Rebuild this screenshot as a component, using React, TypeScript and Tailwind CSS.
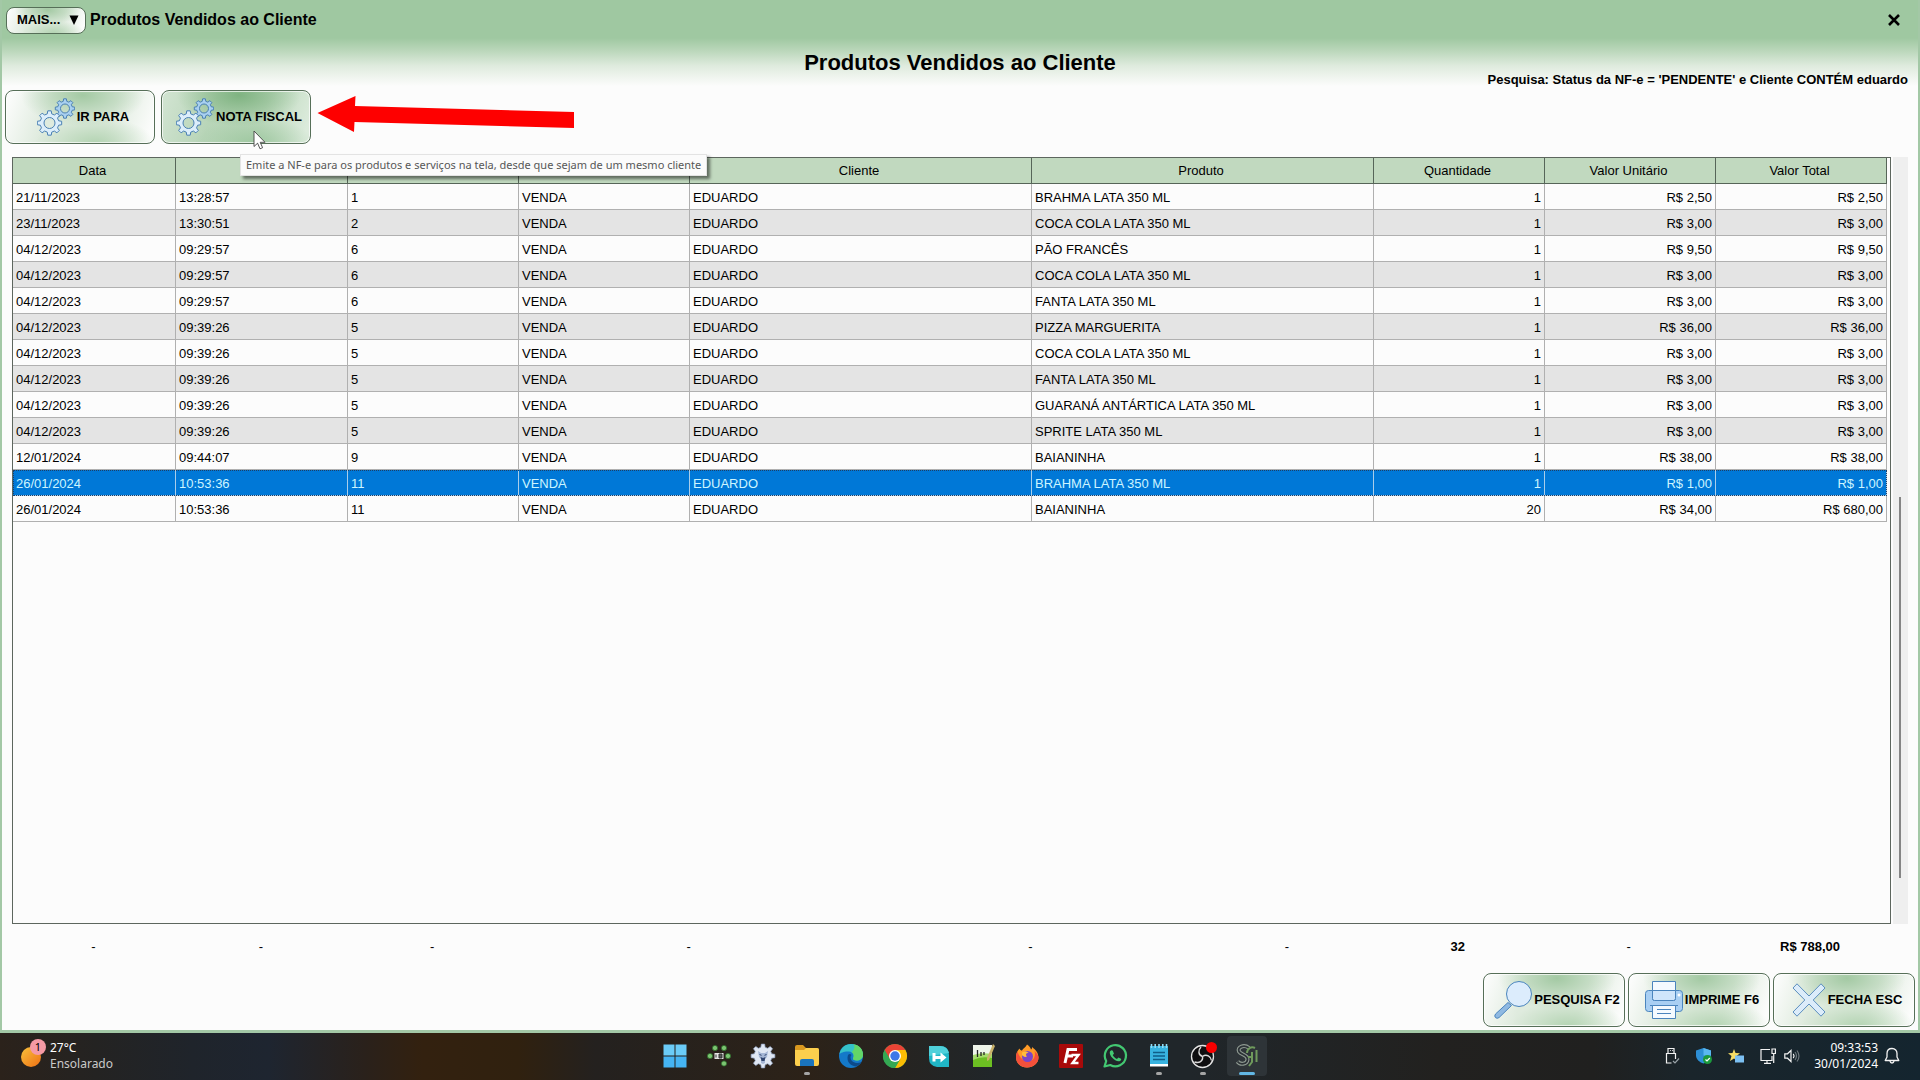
import React from 'react';

interface Sale {
  date: string;
  time: string;
  order: number;
  product: string;
  quantity: number;
  unitPrice: string;
  total: string;
}

const columns = [
  { name: 'Data', label: 'Data', width: 163 },
  { name: 'Hora', label: '', width: 172 },
  { name: 'Venda', label: '', width: 171 },
  { name: 'Tipo', label: '', width: 171 },
  { name: 'Cliente', label: 'Cliente', width: 342 },
  { name: 'Produto', label: 'Produto', width: 342 },
  { name: 'Quantidade', label: 'Quantidade', width: 171 },
  { name: 'Valor Unitário', label: 'Valor Unitário', width: 171 },
  { name: 'Valor Total', label: 'Valor Total', width: 171 },
];

const totalWidth = columns.reduce((sum, c) => sum + c.width, 0);

const sales: Sale[] = [
  { date: '21/11/2023', time: '13:28:57', order: 1, product: 'BRAHMA LATA 350 ML', quantity: 1, unitPrice: 'R$ 2,50', total: 'R$ 2,50' },
  { date: '23/11/2023', time: '13:30:51', order: 2, product: 'COCA COLA LATA 350 ML', quantity: 1, unitPrice: 'R$ 3,00', total: 'R$ 3,00' },
  { date: '04/12/2023', time: '09:29:57', order: 6, product: 'PÃO FRANCÊS', quantity: 1, unitPrice: 'R$ 9,50', total: 'R$ 9,50' },
  { date: '04/12/2023', time: '09:29:57', order: 6, product: 'COCA COLA LATA 350 ML', quantity: 1, unitPrice: 'R$ 3,00', total: 'R$ 3,00' },
  { date: '04/12/2023', time: '09:29:57', order: 6, product: 'FANTA LATA 350 ML', quantity: 1, unitPrice: 'R$ 3,00', total: 'R$ 3,00' },
  { date: '04/12/2023', time: '09:39:26', order: 5, product: 'PIZZA MARGUERITA', quantity: 1, unitPrice: 'R$ 36,00', total: 'R$ 36,00' },
  { date: '04/12/2023', time: '09:39:26', order: 5, product: 'COCA COLA LATA 350 ML', quantity: 1, unitPrice: 'R$ 3,00', total: 'R$ 3,00' },
  { date: '04/12/2023', time: '09:39:26', order: 5, product: 'FANTA LATA 350 ML', quantity: 1, unitPrice: 'R$ 3,00', total: 'R$ 3,00' },
  { date: '04/12/2023', time: '09:39:26', order: 5, product: 'GUARANÁ ANTÁRTICA LATA 350 ML', quantity: 1, unitPrice: 'R$ 3,00', total: 'R$ 3,00' },
  { date: '04/12/2023', time: '09:39:26', order: 5, product: 'SPRITE LATA 350 ML', quantity: 1, unitPrice: 'R$ 3,00', total: 'R$ 3,00' },
  { date: '12/01/2024', time: '09:44:07', order: 9, product: 'BAIANINHA', quantity: 1, unitPrice: 'R$ 38,00', total: 'R$ 38,00' },
  { date: '26/01/2024', time: '10:53:36', order: 11, product: 'BRAHMA LATA 350 ML', quantity: 1, unitPrice: 'R$ 1,00', total: 'R$ 1,00' },
  { date: '26/01/2024', time: '10:53:36', order: 11, product: 'BAIANINHA', quantity: 20, unitPrice: 'R$ 34,00', total: 'R$ 680,00' },
];

const selectedRow = 11;

const footerTotals = ['-', '-', '-', '-', '-', '-', '32', '-', 'R$ 788,00'];

const gearPath = (cx: number, cy: number, outer: number, inner: number) => {
  const points: string[] = [];
  for (let i = 0; i < 8; i++) {
    const base = (i * Math.PI) / 4;
    [[-0.24, inner], [-0.14, outer], [0.14, outer], [0.24, inner]].forEach(([offset, r]) => {
      const x = cx + r * Math.sin(base + offset);
      const y = cy - r * Math.cos(base + offset);
      points.push(`${x.toFixed(2)} ${y.toFixed(2)}`);
    });
  }
  return `M${points.join('L')}Z`;
};

const GearsIcon = () => (
  <svg viewBox="0 0 38 38" className="h-[38px] w-[38px] shrink-0" stroke="#4a80b4" strokeWidth="1">
    <path
      fillRule="evenodd"
      fill="#a9d0f0"
      d={`${gearPath(28, 10.5, 9.8, 7.4)}M32.5 10.5a4.5 4.5 0 1 0-9 0a4.5 4.5 0 1 0 9 0Z`}
    />
    <path
      fillRule="evenodd"
      fill="#dceefb"
      d={`${gearPath(12.5, 25, 12.3, 9.4)}M18 25a5.5 5.5 0 1 0-11 0a5.5 5.5 0 1 0 11 0Z`}
    />
  </svg>
);

const SearchIcon = () => (
  <svg viewBox="0 0 38 38" className="h-[38px] w-[38px] shrink-0" stroke="#4a84bd" strokeWidth="1">
    <path d="M14 21.5l3.5 3L5 36.6q-2 1.4-3.5 0t0-3.6Z" fill="#8fb9e2" />
    <circle cx="25" cy="13" r="12.5" fill="#dcecfc" />
  </svg>
);

const PrinterIcon = () => (
  <svg viewBox="0 0 38 38" className="h-[38px] w-[38px] shrink-0" stroke="#4a84bd" strokeWidth="1">
    <rect x="0.5" y="9.5" width="37" height="21" rx="3" fill="#a9cff3" />
    <path d="M7.5 0.5h23v17q0 2-2 2h-19q-2 0-2-2Z" fill="#f4faff" />
    <path d="M7.5 9.5h23v8q0 2-2 2h-19q-2 0-2-2Z" fill="#cfe5fb" />
    <path d="M5 24.5h28" fill="none" />
    <path d="M7.5 24.5h23v13h-23Z" fill="#f4faff" />
    <path d="M12 28.5h14M12 32.5h14" />
    <circle cx="34" cy="14" r="1.5" fill="#fff" stroke="none" />
  </svg>
);

const CancelIcon = () => (
  <svg viewBox="0 0 34 38" className="h-[38px] w-[34px] shrink-0" stroke="#5c8fc0" strokeWidth="1" strokeLinejoin="round">
    <path
      d="M1 7l4-4.2L17 15 29 2.800 33 7 21.200 19 33 31l-4 4.200L17 23 5 35.200 1 31 12.800 19Z"
      fill="#dcecfa"
    />
  </svg>
);

interface ActionButtonProps {
  icon: React.ReactNode;
  label: string;
  className: string;
}

const ActionButton: React.FC<ActionButtonProps> = ({ icon, label, className }) => (
  <button
    type="button"
    className={`flex h-[54px] items-center justify-center gap-[2px] rounded-[8px] border border-[#566f58] pl-[6px] font-bold whitespace-nowrap inset-ring-1 inset-ring-white/70 ${className}`}
  >
    {icon}
    <span>{label}</span>
  </button>
);

const buttonFace =
  'bg-[radial-gradient(ellipse_42%_60%_at_52%_8%,#a3c9a3_0%,transparent_100%),radial-gradient(ellipse_40%_50%_at_60%_100%,#b4d4b3_0%,transparent_100%),linear-gradient(110deg,#fbfcfb_3%,#dfebde_30%,#dfebde_68%,#fbfcfb_95%)]';
const buttonFaceHover =
  'bg-[radial-gradient(ellipse_42%_60%_at_52%_8%,#7fb381_0%,transparent_100%),radial-gradient(ellipse_40%_50%_at_62%_100%,#9fc8a1_0%,transparent_100%),linear-gradient(110deg,#d0e3d0_3%,#b8d5b8_35%,#bcd8bc_65%,#dcebdc_95%)]';

const taskbarApps: { name: string; running?: boolean; active?: boolean; icon: React.ReactNode }[] = [
  {
    name: 'Iniciar',
    icon: (
      <g fill="#6bccf8">
        <path d="M0.5 0.5h11v11h-11zM12.500 0.500h11v11h-11z" />
        <path d="M0.5 12.5h11v11h-11zM12.500 12.500h11v11h-11z" fill="#45b4f3" />
      </g>
    ),
  },
  {
    name: 'Servidor',
    icon: (
      <g>
        <g fill="#7cc472" stroke="#2c6b28" strokeWidth="0.8">
          <circle cx="8" cy="4" r="2.6" />
          <circle cx="17" cy="4" r="2.6" />
          <circle cx="3" cy="12" r="2.6" />
          <circle cx="21" cy="12" r="2.6" />
          <circle cx="17" cy="19.5" r="2.6" />
        </g>
        <path d="M7.5 9h9v6h-9z" fill="#e4e4e4" />
        <path d="M9 10.5v3M12 10h3v4h-3z" stroke="#333" fill="#555" />
      </g>
    ),
  },
  {
    name: 'Configurador',
    icon: (
      <g>
        <path d={gearPath(12, 12, 12, 9)} fill="#dfe7f3" stroke="#8fa3c4" strokeWidth="0.7" />
        <path d="M7 7l3 2h4l3-2-1 6-2 2v4l-2 1-2-1v-4l-2-2Z" fill="#a5b7d6" />
        <path d="M9.500 13l2.500 1 2.500-1-1 4h-3Z" fill="#30456f" />
        <path d="M8.500 10.500l2 0.800M15.500 10.500l-2 0.800" stroke="#30456f" strokeWidth="1" />
      </g>
    ),
  },
  {
    name: 'Explorador de Arquivos',
    running: true,
    icon: (
      <g>
        <path d="M0 3q0-2 2-2h6l3 3h11q2 0 2 2v4H0Z" fill="#d9981f" />
        <path d="M0 6h9l2-2h11q2 0 2 2v14q0 2-2 2H2q-2 0-2-2Z" fill="#fccf4d" />
        <path d="M5 22v-5q0-2 2-2h10q2 0 2 2v5Z" fill="#1a74bd" />
      </g>
    ),
  },
  {
    name: 'Edge',
    icon: (
      <g>
        <circle cx="12" cy="12" r="12" fill="#1479c9" />
        <path d="M0.500 10C1.500 4 6 0 12 0c7 0 12 5 12 10.500 0 4-3 6-6.500 6-2.500 0-4-1-3.500-2.200C15.500 12 14.500 8 10 7.500 5.500 7 1.500 9 0.500 10Z" fill="#35c1c8" />
        <path d="M14 0.300C20 1 24 5 24 10.500c0 4-3 6-6.500 6-2.500 0-4-1-3.500-2.200 1-1.500 1.300-4-1-6C15 5 17 3 14 0.300Z" fill="#63d667" />
        <path d="M9 11c-2 6 2 11 8 11.500 2-0.700 4-2 5.500-4.500-4 2-9 1-10.500-2.500C11.200 13.500 11.500 12 12.500 11 11.500 9.500 10 9.500 9 11Z" fill="#0c4a8a" />
      </g>
    ),
  },
  {
    name: 'Chrome',
    icon: (
      <g>
        <circle cx="12" cy="12" r="12" fill="#34a853" />
        <path d="M12 12 1.600 6A12 12 0 0 1 22.400 6H12Z" fill="#ea4335" />
        <path d="M12 6h10.400A12 12 0 0 1 12 24l5.200-9Z" fill="#fbbc04" />
        <path d="M1.600 6 6.800 15 12 12V6Z" fill="#ea4335" />
        <path d="M1.600 6A12 12 0 0 0 12 24l5.200-9L12 17 6.800 15Z" fill="#34a853" />
        <circle cx="12" cy="12" r="6" fill="#fff" />
        <circle cx="12" cy="12" r="4.7" fill="#3b78e7" />
      </g>
    ),
  },
  {
    name: 'Acesso remoto',
    icon: (
      <g>
        <path d="M2 2h11q9 0 9 9v12H10Q2 22 2 14Z" fill="#20b6c6" />
        <path d="M2 2h11q7 0 9 7L2 12Z" fill="#4fd0da" />
        <path d="M5.500 9h3v3h5V8.500l6 5-6 5V15h-5v2.500h-3Z" fill="#fff" />
      </g>
    ),
  },
  {
    name: 'Notepad++',
    icon: (
      <g>
        <path d="M2 1h19v22H2z" fill="#eef5ea" />
        <path d="M2 11q8-3 19-1v13H2z" fill="#a4da6a" />
        <path d="M2 16q8-4 19-2v9H2z" fill="#6cbf22" />
        <path d="M6.500 6v7M10 8v4M13 8v3" stroke="#222" strokeWidth="1.3" />
        <path d="M22 0l2 2-6 14-2 1 0-3Z" fill="#c9b26a" />
      </g>
    ),
  },
  {
    name: 'Firefox',
    icon: (
      <g>
        <path d="M1 13C1 9 3 6 4.500 4.500 5 6 6 6.500 7 6.500 8 4 11 3.500 12 0.500c2 1 3.500 3 4 5C17 5 17 4 17 3c4 3 6.500 6 6.500 10.500C23.500 19 18.500 23.500 12 23.500S1 19 1 13Z" fill="#ff9a26" />
        <path d="M1 13c0-2 0.500-4 1.500-5.500C4 12 7 17 13 17c6 0 8-5 6.500-10 3 3 4 5 4 6.500C23.500 19 18.500 23.500 12 23.500S1 19 1 13Z" fill="#f4503b" />
        <circle cx="12.5" cy="12.5" r="5.5" fill="#7a45c8" />
        <path d="M7 8.500c3-1.500 5-1 6.500 0.500-3 0-3 2-1.500 3.500-2 1-4 0-5-1.500Z" fill="#ffbd3a" />
      </g>
    ),
  },
  {
    name: 'FileZilla',
    icon: (
      <g>
        <rect x="0" y="0" width="24" height="24" rx="1" fill="#a80a0a" />
        <path d="M6 19 9 5.500h9M7.500 12h6.500" fill="none" stroke="#fff" strokeWidth="3" />
        <path d="M12.500 11h7l-6 8h6" fill="none" stroke="#fff" strokeWidth="2.4" />
      </g>
    ),
  },
  {
    name: 'WhatsApp',
    icon: (
      <g>
        <path d="M1.500 22.500 3.200 17A10.600 10.600 0 1 1 7.300 21Z" fill="none" stroke="#43c872" strokeWidth="2.2" strokeLinejoin="round" />
        <path d="M8 6.500c-2 1-1.500 4 1 7s6 4.500 8 3.500c1-0.600 1.500-1.700 1-2.300l-2.500-1.300-1.600 1.500c-2-0.700-3.300-2-4.200-3.800L11 9.800 9.800 6.800Q9 6 8 6.500Z" fill="#43c872" />
      </g>
    ),
  },
  {
    name: 'Bloco de Notas',
    running: true,
    icon: (
      <g>
        <path d="M3 2h18v20H3z" fill="#38b3e0" />
        <path d="M3 20h18v2.500H3z" fill="#fff" />
        <path d="M6 8.500h12M6 12h12M6 15.500h12" stroke="#0f5e88" strokeWidth="1.6" />
        <path d="M4.500 0v4M8.200 0v4M12 0v4M15.800 0v4M19.500 0v4" stroke="#8fdcf5" strokeWidth="1.6" />
      </g>
    ),
  },
  {
    name: 'OBS Studio',
    running: true,
    icon: (
      <g>
        <circle cx="11.5" cy="12.5" r="11" fill="#0e0e10" stroke="#e5e5e5" strokeWidth="1.3" />
        <path d="M11.500 12.500C7 11 7 6 10 3M11.500 12.500c4-3 8.500 0 9 4M11.500 12.500c1 5-3.500 7-8 5.500" fill="none" stroke="#d8d8d8" strokeWidth="1.4" />
        <circle cx="20.5" cy="3.5" r="5.5" fill="#f80000" />
      </g>
    ),
  },
  {
    name: 'SG Sistemas',
    active: true,
    icon: (
      <g fill="none">
        <path d="M14 4C9 0 2 3 4 7.500 6 11 13 10.500 12.500 15.500 12 20.500 5 21 2.500 17.500" stroke="#8f9a92" strokeWidth="4" />
        <path d="M14 4C9 0 2 3 4 7.500 6 11 13 10.500 12.500 15.500 12 20.500 5 21 2.500 17.500" stroke="#2c3236" strokeWidth="1.8" />
        <path d="M20 4c-4-2-8 1-8 5M13 13h4M17 8v10l-3 4M21.500 6v12" stroke="#6f9a5c" strokeWidth="2" />
      </g>
    ),
  },
];

const TrayIcons = () => (
  <div className="flex items-center gap-4">
    <svg viewBox="0 0 16 18" className="h-[18px] w-4" fill="none" stroke="#f2f2f2" strokeWidth="1.2">
      <path d="M4 6V1.500h6V6M11.500 12V6.500h-9v9.500h5" />
      <path d="M6 3.500h0.800M8 3.500h0.800" />
      <path d="M9 14l2 2 4-4.500" stroke="#9aa3a8" />
    </svg>
    <svg viewBox="0 0 16 16" className="h-4 w-4 overflow-visible">
      <path d="M7.500 0 15 2.500v5c0 4-4 7-7.500 8C4 14.500 0 11.500 0 7.500v-5Z" fill="#2d8fd5" />
      <path d="M7.500 0 15 2.500v5h-7.500Z" fill="#5ab8f0" />
      <circle cx="11.5" cy="11.5" r="4.5" fill="#1b9a3c" />
      <path d="M9.500 11.500l1.500 1.500 2.800-3" fill="none" stroke="#fff" strokeWidth="1.2" />
    </svg>
    <svg viewBox="0 0 16 16" className="h-4 w-4">
      <path d="M6 1l1.500 4 4.500 0.200-3.500 2.800L10 13 6 10.500 2 13l1.500-5L0 5.200 4.500 5Z" fill="#f5dc64" />
      <path d="M7 7.500h9v7H7z" fill="#7cc0f2" />
    </svg>
    <div className="flex items-center gap-2">
      <svg viewBox="0 0 16 16" className="h-4 w-4" fill="none" stroke="#f2f2f2" strokeWidth="1.2">
        <path d="M10 1.500H1v11h11V8M4 15.400h7M7 12.500v3" />
        <path d="M12 1h3.400v4.500H12zM13.700 5.500V15" />
      </svg>
      <svg viewBox="0 0 16 16" className="h-4 w-4" fill="none" stroke="#f2f2f2" strokeWidth="1.2">
        <path d="M0.800 5.800h2.700L7 2.500v11L3.500 10.200H0.800Z" />
        <path d="M9.300 5.800q1.600 2.200 0 4.400" />
        <path d="M11 4q3 4 0 8M13 2.500q4 5.500 0 11" stroke="#6d777c" />
      </svg>
    </div>
  </div>
);

const Taskbar = () => (
  <footer className="grid h-[47px] grid-cols-[1fr_auto_1fr] items-center bg-[linear-gradient(to_right,#2b221b_0%,#242322_5%,#1f242b_10%,#1e2530_14%,#2a211b_19%,#33210f_22%,#30210f_27%,#24211f_31%,#2c2218_42%,#20262a_52%,#20262a_62%,#22211f_75%,#20201f_83%,#1a252b_88%,#14252f_100%)] font-['Noto_Sans','Open_Sans',sans-serif] text-[12px] leading-4 text-white">
    <div className="flex items-center gap-2 pb-[2px] pl-[20px]">
      <div className="relative h-6 w-[22px]">
        <svg viewBox="0 0 22 24" className="h-6 w-[22px]">
          <defs>
            <linearGradient id="sun" x1="0" y1="0" x2="1" y2="1">
              <stop offset="0" stopColor="#f9c23c" />
              <stop offset="1" stopColor="#ee6f14" />
            </linearGradient>
          </defs>
          <circle cx="11" cy="13" r="10" fill="url(#sun)" />
        </svg>
        <span className="absolute -top-[5px] left-[10px] flex h-4 w-4 items-center justify-center rounded-full bg-[#f59aa5] text-[11px] text-black">
          1
        </span>
      </div>
      <div>
        <p>27°C</p>
        <p className="text-[#c9c9c9]">Ensolarado</p>
      </div>
    </div>

    <nav className="flex items-center">
      {taskbarApps.map((app) => (
        <button
          key={app.name}
          type="button"
          aria-label={app.name}
          className="relative flex h-[47px] w-11 items-center justify-center pb-[1px] pl-[1px]"
        >
          <span
            className={`flex h-10 w-10 items-center justify-center rounded ${app.active ? 'bg-[#2e3438]' : ''}`}
          >
            <svg viewBox="0 0 24 24" className="h-6 w-6 overflow-visible">
              {app.icon}
            </svg>
          </span>
          {app.running && <span className="absolute bottom-[5px] h-[3px] w-[6px] rounded-full bg-[#a5a5a5]" />}
          {app.active && <span className="absolute bottom-[5px] h-[3px] w-4 rounded-full bg-[#62b7e4]" />}
        </button>
      ))}
    </nav>

    <div className="flex items-center justify-end pr-[20px] pb-[2px]">
      <TrayIcons />
      <div className="ml-[14px] text-right">
        <p>09:33:53</p>
        <p>30/01/2024</p>
      </div>
      <svg viewBox="0 0 16 18" className="ml-[6px] h-[18px] w-4" fill="none" stroke="#f2f2f2" strokeWidth="1.3">
        <path d="M8 1.500c-3.200 0-5 2.200-5 5v3.500l-1.800 3.500h13.600L13 10V6.500c0-2.800-1.800-5-5-5Z" strokeLinejoin="round" />
        <path d="M6 14q0.300 2 2 2t2-2" />
      </svg>
    </div>
  </footer>
);

const SalesTable = () => (
  <table className="w-full table-fixed border-separate border-spacing-0">
    <colgroup>
      {columns.map((column) => (
        <col key={column.name} style={{ width: `${(column.width / totalWidth) * 100}%` }} />
      ))}
    </colgroup>
    <thead>
      <tr className="h-[26px] bg-[#c1d9bf]">
        {columns.map((column) => (
          <th
            key={column.name}
            scope="col"
            aria-label={column.name}
            className="border-r border-b border-[#566558] py-0 pr-[3px] pl-0 text-center font-normal"
          >
            {column.label}
          </th>
        ))}
      </tr>
    </thead>
    <tbody>
      {sales.map((sale, index) => {
        const selected = index === selectedRow;
        const rowColor = selected
          ? 'bg-[#0078d7] text-[#cdf5ff] outline-1 -outline-offset-1 outline-dotted outline-[#1d3f66]'
          : index % 2 === 1
            ? 'bg-[#e4e4e4]'
            : 'bg-[#fcfcfc]';
        const cell = `border-r border-b px-[3px] pt-[2px] pb-0 ${selected ? 'border-[#a9cdea]' : 'border-[#b0b0b0]'}`;
        return (
          <tr key={index} aria-selected={selected} className={`h-[26px] ${rowColor}`}>
            <td className={cell}>{sale.date}</td>
            <td className={cell}>{sale.time}</td>
            <td className={cell}>{sale.order}</td>
            <td className={cell}>VENDA</td>
            <td className={cell}>EDUARDO</td>
            <td className={cell}>{sale.product}</td>
            <td className={`${cell} text-right`}>{sale.quantity}</td>
            <td className={`${cell} text-right`}>{sale.unitPrice}</td>
            <td className={`${cell} text-right`}>{sale.total}</td>
          </tr>
        );
      })}
    </tbody>
  </table>
);

const App: React.FC = () => {
  return (
    <div className="flex min-h-screen flex-col bg-[#1f2427] font-['Liberation_Sans',Arial,sans-serif] text-[13px] leading-4 text-black">
      <main className="flex flex-1 flex-col border-x-2 border-b-[3px] border-[#a3c8a6] bg-[#fcfcfc] bg-[linear-gradient(to_bottom,#9fc8a1_38px,#b9d6b9_50px,#dfebde_66px,#fcfcfc_86px)]">
        {/* Title bar */}
        <header className="flex h-[38px] items-center gap-1 pt-[2px] pr-[18px] pl-1">
          <button
            type="button"
            className={`flex h-[27px] w-20 items-center justify-between rounded-[8px] border border-[#566f58] pr-[6px] pl-[10px] font-bold ${buttonFace}`}
          >
            MAIS...
            <svg viewBox="0 0 10 10" className="h-[10px] w-[10px]">
              <path d="M0.500 0.500h9L5 10Z" />
            </svg>
          </button>
          <h1 className="flex-1 text-[16px] leading-5 font-bold">Produtos Vendidos ao Cliente</h1>
          <button type="button" aria-label="Fechar">
            <svg viewBox="0 0 12 12" className="h-3 w-3" stroke="#000" strokeWidth="2.6">
              <path d="M1 1l10 10M11 1 1 11" />
            </svg>
          </button>
        </header>

        <div className="grid h-[52px] grid-cols-[1fr_auto_1fr] items-center px-[10px]">
          <h2 className="col-start-2 pb-[2px] text-[22px] leading-7 font-bold">Produtos Vendidos ao Cliente</h2>
          <p className="self-end pb-[2px] text-right font-bold">
            Pesquisa: Status da NF-e = 'PENDENTE' e Cliente CONTÉM eduardo
          </p>
        </div>

        {/* Toolbar */}
        <div className="relative flex gap-[6px] pl-[3px]">
          <ActionButton icon={<GearsIcon />} label="IR PARA" className={`w-[150px] ${buttonFace}`} />
          <ActionButton icon={<GearsIcon />} label="NOTA FISCAL" className={`w-[150px] ${buttonFaceHover}`} />
          <svg viewBox="0 0 258 38" className="absolute top-[5px] left-[315px] h-[38px] w-[258px]">
            <path d="M0.500 18 38.500 1 38 11 257 17v16L37.500 27 37 37Z" fill="#fe0000" />
          </svg>
          <svg viewBox="0 0 13 20" className="absolute top-10 left-[251px] z-20 h-5 w-[13px]">
            <path d="M1 1v15.500l3.600-3.300 2.400 5.600 2.600-1.100-2.400-5.400H12Z" fill="#fff" stroke="#444" strokeWidth="0.9" />
          </svg>
          <div
            role="tooltip"
            className="absolute top-16 left-[238px] z-10 border border-[#e3e3e3] bg-[#fbfbfb] px-[5px] py-[2px] font-['Noto_Sans','Open_Sans',sans-serif] text-[11px] leading-4 whitespace-nowrap text-[#575757] shadow-[3px_3px_3px_rgba(0,0,0,0.5)]"
          >
            Emite a NF-e para os produtos e serviços na tela, desde que sejam de um mesmo cliente
          </div>
        </div>

        {/* Sales grid */}
        <section className="mt-[13px] flex flex-1 gap-[2px] px-[10px]">
          <div className="flex-1 border border-[#5d665e] bg-[#fcfcfc] pr-[3px]">
            <SalesTable />
          </div>
          <div className="flex w-[15px] flex-col bg-[#efefef] pt-[340px] pr-[1px] pb-[46px]">
            <div className="mx-auto w-[2px] flex-1 bg-[#858585]" />
          </div>
        </section>

        {/* Totals */}
        <div className="mt-[15px] grid grid-cols-[163fr_172fr_171fr_342fr_342fr_171fr_171fr_171fr_192fr] pr-3 pl-[10px] text-center">
          {footerTotals.map((total, index) => (
            <span key={index} className={total === '-' ? 'font-normal' : 'font-bold'}>
              {total}
            </span>
          ))}
        </div>

        <div className="mt-[18px] flex justify-end gap-[3px] pr-[3px] pb-[3px]">
          <ActionButton icon={<SearchIcon />} label="PESQUISA F2" className={`w-[142px] ${buttonFace}`} />
          <ActionButton icon={<PrinterIcon />} label="IMPRIME F6" className={`w-[142px] ${buttonFace}`} />
          <ActionButton icon={<CancelIcon />} label="FECHA ESC" className={`w-[142px] ${buttonFace}`} />
        </div>
      </main>
      <Taskbar />
    </div>
  );
};

export default App;
